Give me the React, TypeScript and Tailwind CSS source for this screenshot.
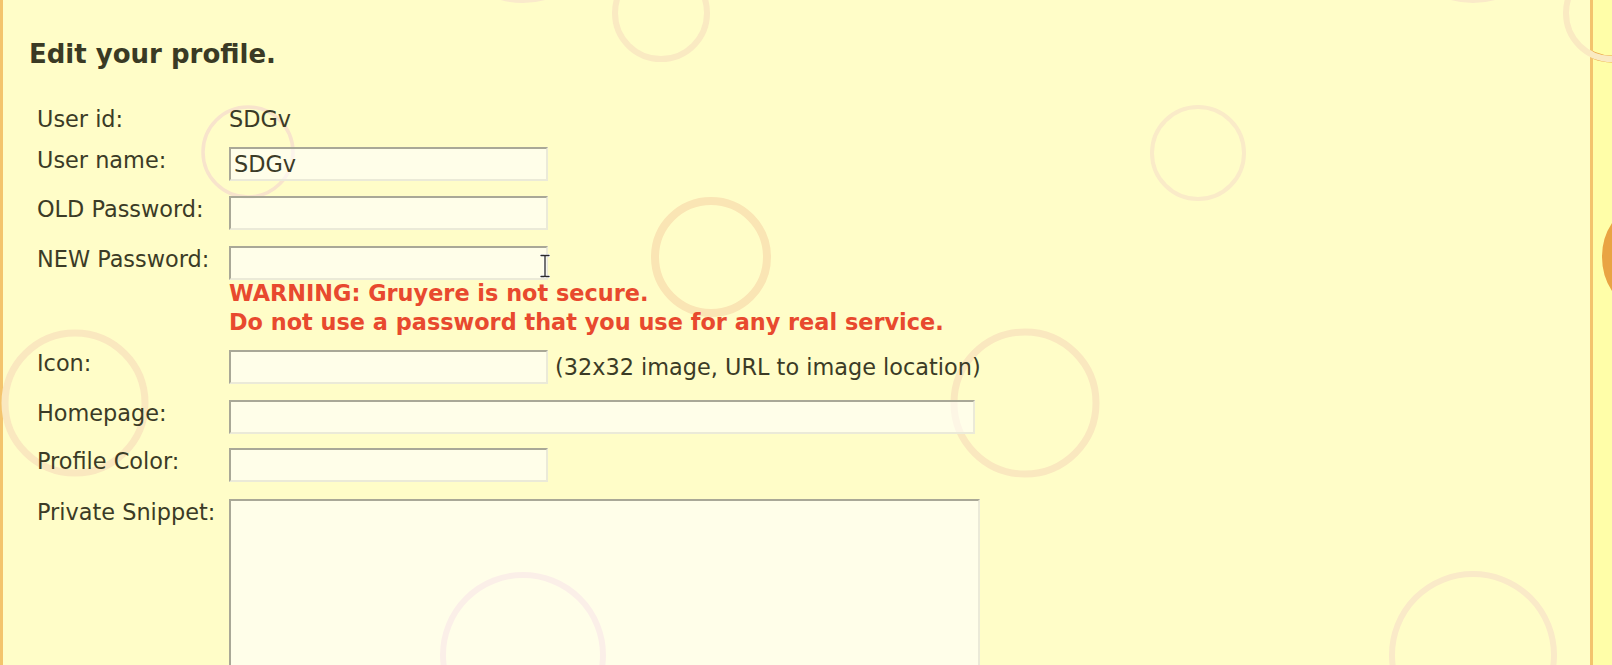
import React from "react";

const inputCls =
  "block h-[34px] bg-white/60 border-2 border-t-[#a9a897] border-l-[#a9a897] border-b-[#ebead8] border-r-[#ebead8] px-[3px] py-[1px] text-[22.4px] leading-[26px] text-[#3b3b26] outline-none font-['DejaVu_Sans',sans-serif]";

function Label({ children }: { children: React.ReactNode }) {
  return <div className="w-[192px] shrink-0 leading-[26px]">{children}</div>;
}

export default function App() {
  return (
    <div className="relative h-[665px] w-[1612px] overflow-hidden bg-[#fffea8] font-['DejaVu_Sans',sans-serif] text-[22.4px] text-[#3b3b26]">
      {/* outer cheese pattern */}
      <svg className="absolute left-0 top-0" width="1612" height="665" viewBox="0 0 1612 665">
        <circle cx="1612" cy="13" r="46" fill="none" stroke="#eca645" strokeWidth="7" />
        <circle cx="1664" cy="257" r="55" fill="none" stroke="#e9a443" strokeWidth="14" />
      </svg>

      <div className="relative h-[665px] w-[1593px] border-x-[3px] border-[#f3c46d] bg-[#fffdc8]">
        {/* faint holes */}
        <svg className="absolute -left-[3px] top-0 pointer-events-none" width="1612" height="665" viewBox="0 0 1612 665">
          <circle cx="523" cy="-81" r="81" fill="none" stroke="#faeacb" strokeWidth="6" />
          <circle cx="1473" cy="-81" r="81" fill="none" stroke="#faeac8" strokeWidth="6" />
          <circle cx="661" cy="13" r="46" fill="none" stroke="#faeac2" strokeWidth="6" />
          <circle cx="1612" cy="13" r="46" fill="none" stroke="#faeac2" strokeWidth="6" />
          <circle cx="248" cy="152" r="45" fill="none" stroke="#f8e4cc" strokeWidth="3.5" />
          <circle cx="1198" cy="153" r="46" fill="none" stroke="#faebc8" strokeWidth="4" />
          <circle cx="711" cy="257" r="56" fill="none" stroke="#fae5b4" strokeWidth="8" />
          <circle cx="75" cy="403" r="70" fill="none" stroke="#fae8bf" strokeWidth="7" />
          <circle cx="1025" cy="403" r="71" fill="none" stroke="#fae8bf" strokeWidth="7" />
          <circle cx="523" cy="655" r="80" fill="none" stroke="#f6d8c6" strokeWidth="6" />
          <circle cx="1473" cy="655" r="81" fill="none" stroke="#faeac8" strokeWidth="6" />
        </svg>

        <div className="relative pl-[26px] pt-[39px]">
          <h2 className="text-[26px] font-bold leading-[30px] text-[#3a3a24]">Edit your profile.</h2>

          <div className="mt-[37px] flex flex-col pl-[8px]">
            <div className="flex">
              <Label>User id:</Label>
              <div className="leading-[26px]">SDGv</div>
            </div>

            <div className="mt-[15px] flex">
              <Label>User name:</Label>
              <input className={`${inputCls} w-[319px]`} defaultValue="SDGv" />
            </div>

            <div className="mt-[15px] flex">
              <Label>OLD Password:</Label>
              <input type="password" className={`${inputCls} w-[319px]`} />
            </div>

            <div className="mt-[16px] flex">
              <Label>NEW Password:</Label>
              <div className="flex flex-col">
                <div className="relative">
                  <input type="password" className={`${inputCls} w-[319px]`} />
                  <svg className="absolute left-[311px] top-[8px]" width="10" height="24" viewBox="0 0 10 24">
                    <path d="M1 1.5h3.2M5.8 1.5H9M5 2v20M1 22.5h3.2M5.8 22.5H9M4.2 1.5Q5 1.5 5 2.5M5.8 1.5Q5 1.5 5 2.5M4.2 22.5Q5 22.5 5 21.5M5.8 22.5Q5 22.5 5 21.5" fill="none" stroke="#ffffff" strokeWidth="3" strokeLinecap="round" />
                    <path d="M1 1.5h3.2M5.8 1.5H9M5 2v20M1 22.5h3.2M5.8 22.5H9M4.2 1.5Q5 1.5 5 2.5M5.8 1.5Q5 1.5 5 2.5M4.2 22.5Q5 22.5 5 21.5M5.8 22.5Q5 22.5 5 21.5" fill="none" stroke="#2a2a2a" strokeWidth="1.3" strokeLinecap="round" />
                  </svg>
                </div>
                <div className="-mt-[1px] font-bold leading-[29px] text-[#e8492e]">
                  <div>WARNING: Gruyere is not secure.</div>
                  <div>Do not use a password that you use for any real service.</div>
                </div>
              </div>
            </div>

            <div className="mt-[13px] flex">
              <Label>Icon:</Label>
              <div className="flex items-center">
                <input className={`${inputCls} w-[319px]`} />
                <span className="ml-[7px] leading-[26px]">(32x32 image, URL to image location)</span>
              </div>
            </div>

            <div className="mt-[16px] flex">
              <Label>Homepage:</Label>
              <input className={`${inputCls} w-[746px]`} />
            </div>

            <div className="mt-[14px] flex">
              <Label>Profile Color:</Label>
              <input className={`${inputCls} w-[319px]`} />
            </div>

            <div className="mt-[17px] flex">
              <Label>Private Snippet:</Label>
              <textarea className={`${inputCls} h-[300px] w-[751px] resize-none`} />
            </div>
          </div>
        </div>
      </div>
    </div>
  );
}
